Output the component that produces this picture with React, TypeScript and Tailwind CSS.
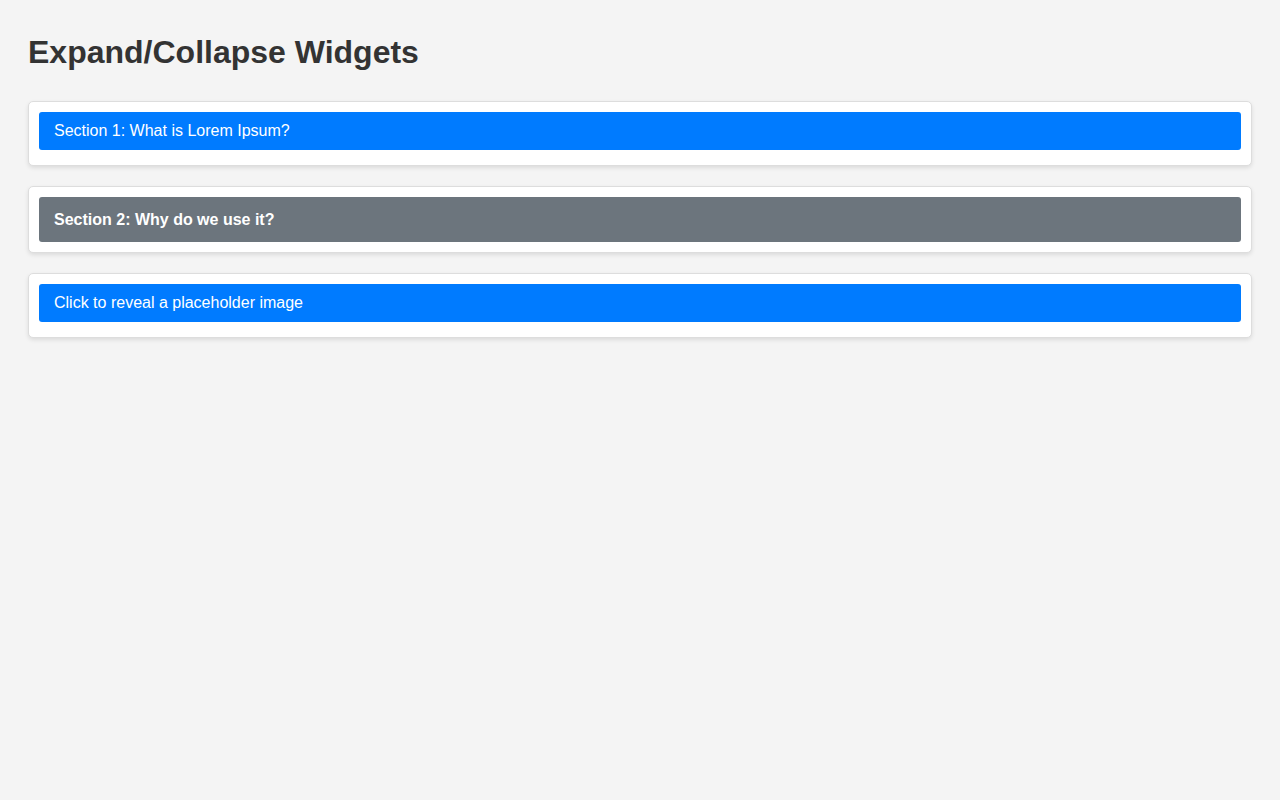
export default function App() {
  return (
    <div
      className="min-h-[800px] bg-[#f4f4f4] px-[28px] pt-[34px]"
      style={{ fontFamily: '"Liberation Sans", Arial, sans-serif' }}
    >
      <h1 className="text-[32px] leading-[37px] font-bold text-[#333] mb-[30px]">
        Expand/Collapse Widgets
      </h1>
      <div className="flex flex-col">
        <div className="bg-white border border-[#ddd] rounded-[5px] shadow-[0_2px_4px_rgba(0,0,0,0.1)] px-[10px] pt-[10px] pb-[15px]">
          <div className="bg-[#007bff] text-white text-[16px] leading-[18px] px-[15px] py-[10px] rounded-[3px]">
            Section 1: What is Lorem Ipsum?
          </div>
        </div>
        <div className="mt-[20px] bg-white border border-[#ddd] rounded-[5px] shadow-[0_2px_4px_rgba(0,0,0,0.1)] p-[10px]">
          <div className="bg-[#6c757d] text-white text-[16px] leading-[19px] font-bold px-[15px] py-[13px] rounded-[3px]">
            Section 2: Why do we use it?
          </div>
        </div>
        <div className="mt-[20px] bg-white border border-[#ddd] rounded-[5px] shadow-[0_2px_4px_rgba(0,0,0,0.1)] px-[10px] pt-[10px] pb-[15px]">
          <div className="bg-[#007bff] text-white text-[16px] leading-[18px] px-[15px] py-[10px] rounded-[3px]">
            Click to reveal a placeholder image
          </div>
        </div>
      </div>
    </div>
  );
}
